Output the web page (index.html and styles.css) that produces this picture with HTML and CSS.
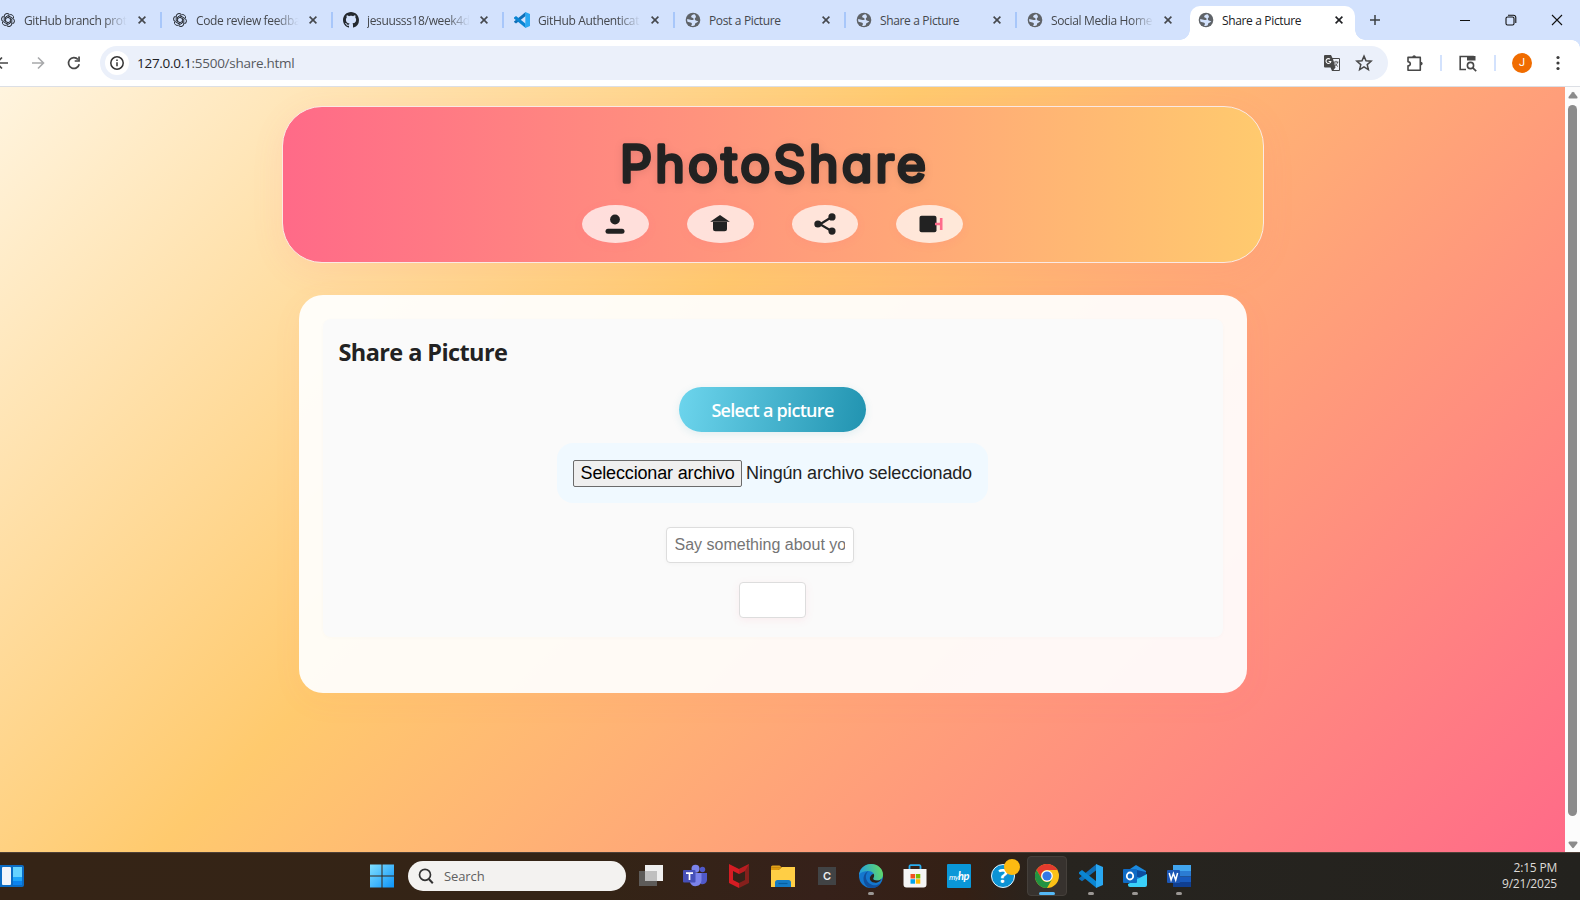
FILE: index.html
```html
<!DOCTYPE html>
<html lang="en">
<head>
<meta charset="utf-8">
<title>Share a Picture</title>
<link rel="stylesheet" href="styles.css">
</head>
<body>
<svg class="defs" width="0" height="0">
  <defs>
    <symbol id="globe" viewBox="0 0 16 16"><circle cx="8" cy="8" r="7.300" fill="#5f6368"/><path d="M9.600 2.300C7.400 2.500 5.800 3.700 6.200 5c.3 1 2.300.7 2.500 1.900.1 1-1.200 1.300-2.200 1L2.200 7c-.2 1 0 2 .3 2.800l2.900.6c1.300.3 1.800 1.100 1.400 2l-.7 1.300c1.300.4 2.700.2 3.800-.5 0-1.200.4-2.100 1.500-2.400.9-.3 1.500-.9 1.900-1.800-1.500-.1-2.500-.3-3.100-1-.7-.9-.5-1.900.5-2.500.6-.5.200-1.600-1.100-3.200z" fill="#d3e2fd"/></symbol>
    <symbol id="gpt" viewBox="0 0 16 16"><g fill="none" stroke="#2b3038" stroke-width="1"><path d="M5.600 9.400V5L9.300 2.900a2.900 2.900 0 0 1 4.200 3.200"/><path d="M5.600 9.400V5L9.300 2.900a2.900 2.900 0 0 1 4.200 3.200" transform="rotate(60 8 8)"/><path d="M5.600 9.400V5L9.300 2.900a2.900 2.900 0 0 1 4.200 3.200" transform="rotate(120 8 8)"/><path d="M5.600 9.400V5L9.300 2.900a2.900 2.900 0 0 1 4.200 3.200" transform="rotate(180 8 8)"/><path d="M5.600 9.400V5L9.300 2.900a2.900 2.900 0 0 1 4.200 3.200" transform="rotate(240 8 8)"/><path d="M5.600 9.400V5L9.300 2.900a2.900 2.900 0 0 1 4.200 3.200" transform="rotate(300 8 8)"/></g></symbol>
    <symbol id="github" viewBox="0 0 16 16"><path fill="#24292f" d="M8 0C3.58 0 0 3.58 0 8c0 3.54 2.29 6.53 5.47 7.59.4.07.55-.17.55-.38 0-.19-.01-.82-.01-1.49-2.01.37-2.53-.49-2.69-.94-.09-.23-.48-.94-.82-1.13-.28-.15-.68-.52-.01-.53.63-.01 1.08.58 1.23.82.72 1.21 1.87.87 2.33.66.07-.52.28-.87.51-1.07-1.78-.2-3.64-.89-3.64-3.95 0-.87.31-1.59.82-2.15-.08-.2-.36-1.02.08-2.12 0 0 .67-.21 2.2.82.64-.18 1.32-.27 2-.27s1.36.09 2 .27c1.53-1.04 2.2-.82 2.2-.82.44 1.1.16 1.92.08 2.12.51.56.82 1.27.82 2.15 0 3.07-1.87 3.75-3.65 3.95.29.25.54.73.54 1.48 0 1.07-.01 1.93-.01 2.2 0 .21.15.46.55.38A8.01 8.01 0 0 0 16 8c0-4.42-3.58-8-8-8z"/></symbol>
    <symbol id="vscode" viewBox="0 0 24 24"><path d="M17.500 6 3 17.200 0 15v-.8L17.500 0z" fill="#0f6fb8"/><path d="M0 9v-.8L3 6l14.500 11.500V24L0 9.800z" fill="#0a85d2"/><path d="M17 0 24 3v18l-7 3z" fill="#29a8f2"/></symbol>
    <symbol id="x" viewBox="0 0 10 10"><path d="M1.600 1.600 8.400 8.400M8.400 1.600 1.600 8.400" stroke="currentColor" stroke-width="1.600" fill="none"/></symbol>
  </defs>
</svg>
<div class="screen">
  <header class="tabstrip">
    <div class="tab tab-first"><svg class="fav"><use href="#gpt"/></svg><span class="label fade">GitHub branch prote</span><svg class="close"><use href="#x"/></svg></div>
    <div class="tab"><svg class="fav"><use href="#gpt"/></svg><span class="label fade">Code review feedba</span><svg class="close"><use href="#x"/></svg></div>
    <div class="tab"><svg class="fav"><use href="#github"/></svg><span class="label fade">jesuusss18/week4d</span><svg class="close"><use href="#x"/></svg></div>
    <div class="tab"><svg class="fav"><use href="#vscode"/></svg><span class="label fade">GitHub Authenticat</span><svg class="close"><use href="#x"/></svg></div>
    <div class="tab"><svg class="fav"><use href="#globe"/></svg><span class="label">Post a Picture</span><svg class="close"><use href="#x"/></svg></div>
    <div class="tab"><svg class="fav"><use href="#globe"/></svg><span class="label">Share a Picture</span><svg class="close"><use href="#x"/></svg></div>
    <div class="tab tab-last"><svg class="fav"><use href="#globe"/></svg><span class="label fade">Social Media Home</span><svg class="close"><use href="#x"/></svg></div>
    <div class="tab tab-active"><svg class="fav"><use href="#globe"/></svg><span class="label">Share a Picture</span><svg class="close"><use href="#x"/></svg></div>
    <svg class="newtab" viewBox="0 0 12 12"><path d="M6 1v10M1 6h10" stroke="#3c4043" stroke-width="1.5"/></svg>
    <div class="wincontrols">
      <svg viewBox="0 0 12 12"><path d="M1 6.500h10" stroke="#111"/></svg>
      <svg viewBox="0 0 12 12" fill="none" stroke="#111" stroke-width="1.100"><rect x="1" y="3" width="8" height="8" rx="1.500"/><path d="M3 1.200h5.500a2.300 2.300 0 0 1 2.300 2.300V9"/></svg>
      <svg viewBox="0 0 12 12"><path d="m1 1 10 10M11 1 1 11" stroke="#111" stroke-width="1.100"/></svg>
    </div>
  </header>

  <div class="toolbar">
    <svg class="back" viewBox="0 0 16 16" fill="none" stroke="#474747" stroke-width="1.700"><path d="M14 8H3M8 2.500 2.500 8 8 13.500"/></svg>
    <svg class="forward" viewBox="0 0 16 16" fill="none" stroke="#a8a9ab" stroke-width="1.600"><path d="M2 8h11M8 2.500 13.500 8 8 13.500"/></svg>
    <svg class="reload" viewBox="0 0 16 16"><path d="M13.200 9.200A5.400 5.400 0 1 1 12 4.500" fill="none" stroke="#474747" stroke-width="1.700"/><path d="M13.900 1.600v5.200H8.700V5.200h3.500V1.600z" fill="#474747"/></svg>
    <div class="omnibox">
      <span class="info"><svg viewBox="0 0 16 16"><circle cx="8" cy="8" r="6.200" fill="none" stroke="#333" stroke-width="1.500"/><path d="M8 7.200v4M8 4.500v1.500" stroke="#333" stroke-width="1.500"/></svg></span>
      <span class="url"><b>127.0.0.1</b>:5500/share.html</span>
      <svg class="translate" viewBox="0 0 18 18"><path d="M2 1h6l1.500 3H16a1 1 0 0 1 1 1v11a1 1 0 0 1-1 1H9l-1.500-3.500H2a1 1 0 0 1-1-1V2a1 1 0 0 1 1-1z" fill="#474747"/><path d="M10 5h6v11h-5.500l2-2.500z" fill="#f0f3fa"/><path d="M7 5.200a2.400 2.400 0 1 0 .8 2.300H5.600" fill="none" stroke="#fff" stroke-width="1.100"/><path d="M10.500 8h5M13 6.800V8M14.700 8c-.5 2.300-2 3.700-3.500 4.500M11.500 8.500c.6 1.700 2 3 3.500 4" fill="none" stroke="#555" stroke-width=".9"/></svg>
      <svg class="star" viewBox="0 0 18 18"><path d="m9 2.100 2 4.700 5.100.4-3.900 3.400 1.200 5L9 12.900l-4.400 2.700 1.200-5-3.900-3.400 5.100-.4z" fill="none" stroke="#474747" stroke-width="1.500"/></svg>
    </div>
    <svg class="ext" viewBox="0 0 18 18"><path d="M2 3.400h12.300v12.800H2v-4.300c1.500-.1 2.300-.9 2.300-2.100S3.500 7.800 2 7.700z" fill="none" stroke="#474747" stroke-width="1.600" stroke-linejoin="round"/><path d="M6.300 3.300c0-2.900 3.700-2.900 3.700 0zM14.500 7.700c2.900 0 2.900 3.700 0 3.700z" fill="#474747"/></svg>
    <i class="bar"></i>
    <svg class="lens" viewBox="0 0 20 18"><path d="M8 15.500H2.200v-13h13.600" fill="none" stroke="#474747" stroke-width="1.600"/><path d="M9 2h8.500v4.500H9z" fill="#474747"/><circle cx="12.500" cy="11.500" r="3.100" fill="none" stroke="#474747" stroke-width="1.600"/><path d="m14.800 13.800 3.400 3.300" stroke="#474747" stroke-width="1.700"/></svg>
    <i class="bar"></i>
    <span class="avatar">J</span>
    <svg class="menu" viewBox="0 0 4 16" fill="#3c3c3c"><circle cx="2" cy="2.500" r="1.600"/><circle cx="2" cy="8" r="1.600"/><circle cx="2" cy="13.500" r="1.600"/></svg>
  </div>

  <div class="viewport">
    <div class="page">
      <section class="banner">
        <h1><svg viewBox="0 0 300 60"><text x="-3" y="48" textLength="306">PhotoShare</text></svg></h1>
        <nav>
          <a><svg viewBox="0 0 24 24" fill="#222"><circle cx="12" cy="7.500" r="4.900"/><rect x="2.500" y="16.700" width="19" height="5" rx="2.500"/></svg></a>
          <a><svg viewBox="0 0 24 24" fill="#222"><path d="M2.200 9.700h19.600L12 3z"/><path d="M5 10.100h14v6.700a2.500 2.500 0 0 1-2.500 2.500h-9A2.500 2.500 0 0 1 5 16.800z"/></svg></a>
          <a><svg viewBox="0 0 24 24" fill="#222"><path d="M18.800 5 7 12.200l12 7" fill="none" stroke="#222" stroke-width="2.200"/><circle cx="4.900" cy="12" r="3.600"/><circle cx="19" cy="4.900" r="3.600"/><circle cx="19" cy="19.100" r="3.600"/></svg></a>
          <a><svg viewBox="0 0 24 24"><rect x="1.500" y="3.800" width="17" height="16.500" rx="2" fill="#222"/><path d="M17 12h6.700M23.200 6v12" fill="none" stroke="#ff6b8b" stroke-width="2.600"/></svg></a>
        </nav>
      </section>
      <main class="card">
        <section class="panel">
          <h2>Share a Picture</h2>
          <div class="select">Select a picture</div>
          <div class="file"><span class="choose">Seleccionar archivo</span><span class="chosen">Ningún archivo seleccionado</span></div>
          <div class="caption"><span>Say something about yo</span></div>
          <div class="submit"></div>
        </section>
      </main>
    </div>
    <div class="scroll">
      <svg viewBox="0 0 10 8" fill="#8b8b8b"><path d="M4.200 1.200Q5 .3 5.800 1.200L9.500 6Q9.800 7.500 8.500 7.500h-7Q.2 7.500.5 6z"/></svg>
      <i></i>
      <svg class="down" viewBox="0 0 10 8" fill="#8b8b8b"><path d="M4.200 6.800q.8.900 1.600 0L9.500 2Q9.800.5 8.500.5h-7Q.2.500.5 2z"/></svg>
    </div>
  </div>

  <footer class="taskbar">
    <svg class="widgets" viewBox="0 0 24 22"><path d="M0 0h22a2 2 0 0 1 2 2v18a2 2 0 0 1-2 2H0z" fill="#0b6cc4"/><rect x="2" y="2" width="9" height="18" rx="1" fill="#f2f5fa"/><path d="M13 2h9v10h-9z" fill="#65d3ff"/><path d="M13 12h9v4h-9z" fill="#1ca5fa"/><path d="M13 16h9v4h-9z" fill="#0b83ee"/></svg>
    <svg class="start" viewBox="0 0 24 24"><defs><linearGradient id="w" gradientUnits="userSpaceOnUse" x1="0" y1="0" x2="24" y2="24"><stop stop-color="#83e0ff"/><stop offset="1" stop-color="#0b93f8"/></linearGradient></defs><path d="M0 .500h11.500v11H0zM12.500.500H24v11H12.500zM0 12.500h11.500v11H0zM12.500 12.500H24v11H12.500z" fill="url(#w)"/></svg>
    <div class="search"><svg viewBox="0 0 16 16"><circle cx="7" cy="6.800" r="5.500" fill="none" stroke="#333" stroke-width="1.700"/><path d="m10.800 11 4 4.200" stroke="#333" stroke-width="2"/></svg><span>Search</span></div>
    <div class="apps">
      <div class="app"><svg viewBox="0 0 24 24"><path d="M0 7h18v15H0z" fill="#5d5b59"/><path d="M6 1h18v16H6z" fill="#efefef"/><path d="M6 7h12v10H6z" fill="#bfbfbf"/></svg></div>
      <div class="app"><svg viewBox="0 0 24 24"><circle cx="19.500" cy="5.500" r="2.700" fill="#5059c9"/><path d="M15 9h9v7a4.500 4.500 0 0 1-6 4z" fill="#5059c9"/><circle cx="12.500" cy="4.800" r="4" fill="#7b83eb"/><path d="M7 9h11.500v7.500a6 6 0 0 1-11.500 2z" fill="#7b83eb"/><rect y="6" width="12.500" height="12.500" rx="1" fill="#4650b8"/><path d="M3 9.200h7M6.500 9.200v6.800" stroke="#fff" stroke-width="1.700"/></svg></div>
      <div class="app"><svg viewBox="0 0 24 24"><path d="m2 0 10 5v5L6 7v9l6 3v5L2 19z" fill="#d51c23"/><path d="m22 0-10 5v5l6-3v9l-6 3v5l10-5z" fill="#84201c"/><path d="M22 0 12 5v5l6-3z" fill="#b91c20"/></svg></div>
      <div class="app"><svg viewBox="0 0 24 24"><path d="M0 3a1.500 1.500 0 0 1 1.500-1.500h7l2.500 2H0z" fill="#e3a21a"/><path d="M0 6h7.500L11 3h13v20H0z" fill="#ffce45"/><path d="M0 6V3.200h11L7.500 6z" fill="#dd990e"/><path d="M4 23v-4.500A2.500 2.500 0 0 1 6.500 16h11a2.500 2.500 0 0 1 2.500 2.500V23z" fill="#147bc4"/><path d="M7.500 19.500h9" stroke="#075f9f" stroke-width="1.200"/></svg></div>
      <div class="app"><span class="tile-c">C</span></div>
      <div class="app"><svg viewBox="0 0 24 24"><defs><linearGradient id="e1" y1=".4" x2="1" y2=".2"><stop stop-color="#229de0"/><stop offset="1" stop-color="#65dd61"/></linearGradient></defs><circle cx="12" cy="12" r="12" fill="#1477ce"/><path d="M0 11C.8 4 6 0 12 0c7 0 12 5 12 10.500 0 4-3 6-6.200 6-3 0-4.300-1-3.300-2.500 2-4-1.200-7-5-7C5 7 2 8 0 11z" fill="url(#e1)"/><path d="M9.500 7.300c-4 3-4 11 4 13.700 3 .9 6 0 8.800-2.500-3 5.500-9 6.500-13.300 4.800C2 19 4 8.500 9.500 7.300z" fill="#10509e"/><path d="M14.500 9.800c1 1.200.8 3-.2 4.300-.8 1.600.9 2.400 3.500 2.400 2 0 3.500-.6 4.500-1.600-.3 2-3.700 4-7 3.700-5-.5-6.500-6.200-.8-8.800z" fill="#2b2018"/></svg><i class="dot"></i></div>
      <div class="app"><svg viewBox="0 0 24 24"><path d="M6.500 6V2.500A1.200 1.200 0 0 1 7.700 1.200h8.600a1.200 1.200 0 0 1 1.200 1.300V6" fill="none" stroke="#28adf0" stroke-width="1.800"/><path d="M.5 5h23v15.500a3 3 0 0 1-3 3h-17a3 3 0 0 1-3-3z" fill="#f5f5f5"/><path d="M7.500 10H12v4.500H7.500z" fill="#f25022"/><path d="M12.800 10h4.500v4.500h-4.500z" fill="#7fba00"/><path d="M7.500 15.200H12v4.500H7.500z" fill="#00a4ef"/><path d="M12.800 15.200h4.500v4.500h-4.500z" fill="#ffb900"/></svg></div>
      <div class="app"><span class="tile-hp">my<b>hp</b></span></div>
      <div class="app"><span class="help">?</span><i class="badge"></i></div>
      <div class="app app-active"><svg viewBox="0 0 24 24"><circle cx="12" cy="12" r="12" fill="#fbc116"/><path d="M1.600 6A12 12 0 0 1 22.400 6H12a6 6 0 0 0-5.200 9z" fill="#e33b2e"/><path d="M1.600 6A12 12 0 0 0 12 24l5.200-9A6 6 0 0 1 6.800 15z" fill="#229342"/><circle cx="12" cy="12" r="5.800" fill="#fff"/><circle cx="12" cy="12" r="4.600" fill="#3478e6"/></svg><i class="dot dot-active"></i></div>
      <div class="app"><svg><use href="#vscode"/></svg><i class="dot"></i></div>
      <div class="app"><svg viewBox="0 0 24 24"><path d="M4 7 13 1l10 6v9H4z" fill="#1b8ae0"/><path d="m14 6 9 2v7l-9-2z" fill="#0b4da0"/><path d="M5 20 24 10v11a2 2 0 0 1-2 2H7a2 2 0 0 1-2-2z" fill="#3ad0fa"/><rect y="5" width="14" height="14" rx="1" fill="#0f6bc5"/><ellipse cx="7" cy="12" rx="3.200" ry="3.500" fill="none" stroke="#fff" stroke-width="1.800"/></svg><i class="dot"></i></div>
      <div class="app"><svg viewBox="0 0 24 24"><path d="M6 1h18v6H6z" fill="#41a5ee"/><path d="M6 7h18v5.500H6z" fill="#2b7cd3"/><path d="M6 12.500h18V18H6z" fill="#185abd"/><path d="M6 18h18v5H6z" fill="#103f91"/><rect y="6" width="13" height="13" rx="1" fill="#1c56b4"/><path d="m2.200 9 1.900 7L6.400 9.500l2.300 6.500 1.900-7" fill="none" stroke="#fff" stroke-width="1.500"/></svg><i class="dot"></i></div>
    </div>
    <div class="clock"><span>2:15 PM</span><span>9/21/2025</span></div>
  </footer>
</div>
</body>
</html>
```
FILE: styles.css
```css
* { box-sizing: border-box; }
body { margin: 0; font-family: "Open Sans", "Noto Sans", sans-serif; color: #222; }
.defs { display: block; }
.screen { width: 1580px; height: 900px; overflow: hidden; display: flex; flex-direction: column; }

/* tab strip */
.tabstrip { height: 40px; background: #d3e2fd; display: flex; align-items: center; flex: none; }
.tab { width: 171px; height: 40px; padding-left: 11px; display: flex; align-items: center; position: relative; flex: none; color: #45484d; }
.tab::after { content: ""; position: absolute; right: -1px; top: 12px; width: 2px; height: 16px; background: #a8c7fa; }
.tab-first { width: 161px; padding-left: 0; }
.tab-last { width: 174px; }
.tab-last::after, .tab-active::after { display: none; }
.fav { width: 16px; height: 16px; flex: none; }
.label { width: 106px; margin-left: 8px; padding-top: 2px; white-space: nowrap; font-size: 12px; letter-spacing: -0.35px; line-height: 18px; flex: none; }
.fade { -webkit-mask-image: linear-gradient(90deg, #000 75%, transparent 97%); mask-image: linear-gradient(90deg, #000 75%, transparent 97%); }
.close { width: 10px; height: 10px; margin-left: 6px; flex: none; }
.tab-first .close { margin-left: 7px; }
.tab-active { width: 165px; height: 34px; align-self: flex-end; background: #fff; border-radius: 10px 10px 0 0; padding-left: 8px; padding-bottom: 6px; color: #202124; }
.tab-active::before { content: ""; position: absolute; left: -10px; right: -10px; bottom: 0; height: 10px; background: radial-gradient(circle at 0 0, transparent 9.500px, #fff 10px) left / 10px 10px no-repeat, radial-gradient(circle at 100% 0, transparent 9.500px, #fff 10px) right / 10px 10px no-repeat; }
.newtab { width: 12px; height: 12px; margin-left: 14px; }
.wincontrols { margin-left: auto; margin-right: 17px; display: flex; gap: 34px; }
.wincontrols svg { width: 12px; height: 12px; }

/* toolbar */
.toolbar { height: 47px; flex: none; border-bottom: 1px solid #dcdfe5; display: flex; align-items: center; background: radial-gradient(circle at 0 100%, #fff 7.500px, #d3e2fd 8px) right top / 8px 8px no-repeat, #fff; }
.toolbar svg, .toolbar .bar, .avatar { flex: none; }
.back { width: 16px; height: 16px; margin-left: -6px; }
.forward { width: 16px; height: 16px; margin-left: 20px; }
.reload { width: 16px; height: 16px; margin-left: 20px; }
.omnibox { width: 1288px; height: 34px; margin-left: 18px; border-radius: 17px; background: #ebf0fa; display: flex; align-items: center; padding: 0 15px 0 5px; }
.info { width: 24px; height: 24px; border-radius: 50%; background: #fff; display: grid; place-items: center; }
.info svg { width: 16px; height: 16px; }
.url { margin-left: 8px; font-size: 13.500px; letter-spacing: -0.27px; color: #56595e; }
.url b { font-weight: 400; color: #202124; }
.translate { width: 18px; height: 18px; margin-left: auto; }
.star { width: 18px; height: 18px; margin-left: 14px; }
.ext { width: 18px; height: 18px; margin-left: 18px; }
.bar { width: 2px; height: 16px; background: #d3e2fd; margin-left: 16px; }
.lens { width: 20px; height: 18px; margin-left: 16px; }
.avatar { width: 20px; height: 20px; margin-left: 16px; border-radius: 50%; background: #f06c00; color: #fff; font: 11px/20px Roboto, sans-serif; text-align: center; }
.menu { width: 4px; height: 16px; margin-left: 24px; }

/* web page */
.viewport { height: 765px; flex: none; display: flex; overflow: hidden; }
.page { width: 1585px; margin-left: -20px; flex: none; padding-top: 19px; background: linear-gradient(135deg, #fff5e1 0%, #ffca6e 40%, #ff6a88 100%); }
.banner { width: 982px; height: 157px; margin: 0 auto; border: 1px solid #fbe9e4; border-radius: 40px; background: linear-gradient(90deg, #ff6a88, #ffca6e); padding-top: 27px; box-shadow: 0 8px 32px rgba(255, 106, 136, 0.1); }
.banner h1 { margin: 0; height: 60px; display: flex; justify-content: center; }
.banner h1 svg { width: 300px; height: 60px; overflow: visible; filter: drop-shadow(0 2px 4px rgba(0, 0, 0, 0.1)); }
.banner h1 text { font: 400 50px "Comic Sans MS", Inter, sans-serif; font-feature-settings: "cv11"; fill: #222; stroke: #222; stroke-width: 3.400px; stroke-linejoin: round; }
.banner nav { display: flex; justify-content: center; gap: 38px; margin-top: 11px; }
.banner a { width: 66.800px; height: 38px; border-radius: 50%; background: rgba(255, 255, 255, 0.72); box-shadow: 0 2px 8px rgba(255, 106, 136, 0.12); display: grid; place-items: center; }
.banner a svg { width: 24px; height: 24px; overflow: visible; }
.card { width: 948px; height: 398px; margin: 32px auto 0; padding: 24px; border-radius: 24px; background: rgba(255, 255, 255, 0.93); box-shadow: 0 8px 32px rgba(255, 106, 136, 0.05); }
.panel { height: 318px; background: #fafafa; border-radius: 8px; padding: 16px 16px; box-shadow: 0 1px 4px rgba(0, 0, 0, 0.02); display: flex; flex-direction: column; align-items: center; }
.panel h2 { margin: 0; align-self: flex-start; font-size: 23.500px; line-height: 34px; letter-spacing: -0.6px; font-weight: 700; }
.select { width: 187px; height: 45px; margin-top: 18px; border-radius: 22.500px; background: linear-gradient(100deg, #6dd5ed, #2193b0); color: #fff; font-size: 18px; font-weight: 600; letter-spacing: -0.7px; line-height: 46px; text-align: center; box-shadow: 0 2px 8px rgba(33, 147, 176, 0.12); }
.file { height: 60px; margin-top: 11px; padding: 0 16px; border-radius: 16px; background: #f0f9ff; display: flex; align-items: center; gap: 4px; font: 18px/22px "Liberation Sans", Arial, sans-serif; letter-spacing: -0.16px; white-space: nowrap; }
.choose { height: 27px; padding: 0 6.500px; border: 1px solid #6b6b6b; border-radius: 2px; background: #efefef; color: #000; line-height: 24px; }
.chosen { padding-bottom: 1px; }
.caption { width: 188px; height: 36px; margin: 24px 26px 0 0; padding: 0 8px; border: 1px solid #ddd; border-radius: 4px; background: #fff; font: 16px/34px "Liberation Sans", Arial, sans-serif; color: #757575; box-shadow: 0 1px 4px rgba(0, 0, 0, 0.03); }
.caption span { display: block; overflow: hidden; white-space: nowrap; }
.submit { width: 67px; height: 36px; margin-top: 19px; border: 1px solid #ddd; border-radius: 4px; background: #fff; box-shadow: 0 2px 8px rgba(255, 106, 136, 0.1); }
.scroll { width: 15px; background: #fcfcfc; flex: none; display: flex; flex-direction: column; align-items: center; padding-top: 4px; }
.scroll svg { width: 10px; height: 8px; flex: none; }
.scroll i { width: 9px; height: 711px; margin-top: 6px; border-radius: 5px; background: #8b8b8b; }
.scroll .down { margin-top: 25px; }

/* taskbar */
.taskbar { height: 48px; flex: none; border-top: 1px solid #4d4038; background: linear-gradient(90deg, #352416 0%, #342416 38%, #36211a 52%, #342015 61%, #27241f 67%, #23221e 100%); display: flex; align-items: center; padding-bottom: 1px; }
.widgets { width: 24px; height: 22px; flex: none; }
.start { width: 24px; height: 24px; margin-left: 346px; flex: none; }
.search { width: 218px; height: 30px; margin-left: 14px; border-radius: 15px; background: #f3f2f0; display: flex; align-items: center; padding-left: 10px; font-size: 13px; letter-spacing: -0.1px; color: #606060; flex: none; }
.search svg { width: 16px; height: 16px; margin-right: 10px; }
.apps { margin-left: 3px; display: flex; }
.app { width: 44px; height: 40px; display: grid; place-items: center; position: relative; }
.app svg { width: 24px; height: 24px; }
.app-active { width: 40px; margin: 0 2px; border: 1px solid #45403b; border-radius: 4px; background: #37322e; }
.dot { position: absolute; bottom: 1px; left: 19px; width: 6px; height: 3px; border-radius: 2px; background: #9b9794; }
.dot-active { left: 11px; bottom: 0; width: 16px; background: #55b9f6; }
.tile-c { width: 18px; height: 18px; background: #414345; color: #eee; font: 600 11px/18px Inter, sans-serif; text-align: center; }
.tile-hp { width: 24px; height: 24px; background: #0a97d8; color: #fff; font: italic 8px/23px Lato, sans-serif; text-align: center; letter-spacing: -0.5px; border-radius: 1px; }
.tile-hp b { font-size: 11px; }
.help { width: 24px; height: 24px; border: 1.500px solid #e7f5fc; border-radius: 50%; background: #0c93d4; color: #fff; font: 700 20px/21px "Open Sans", sans-serif; text-align: center; }
.badge { position: absolute; right: 5px; top: 3px; width: 16px; height: 16px; border-radius: 50%; background: #fdbb12; }
.clock { margin-left: auto; margin-right: 23px; display: flex; flex-direction: column; align-items: flex-end; color: #dedbd8; font-size: 12px; line-height: 16px; letter-spacing: -0.2px; }
```
